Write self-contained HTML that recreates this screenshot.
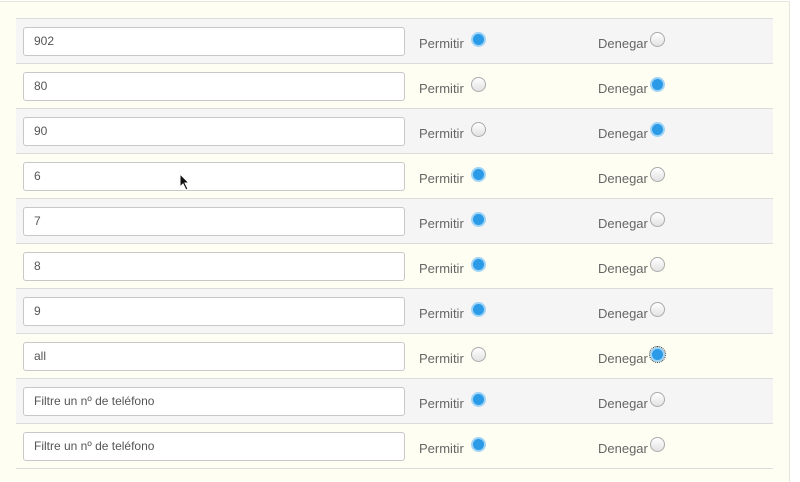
<!DOCTYPE html>
<html><head><style>
body{margin:0;width:800px;height:476px;background:#fff;font-family:"Liberation Sans",sans-serif;overflow:hidden;position:relative}
.panel{position:absolute;left:0;top:1px;width:789px;height:480px;background:#fefef2;border-top:1px solid #e6e6dc;border-right:1px solid #e6e6dc}
.row{position:absolute;left:16px;width:757px;height:44px;border-top:1px solid #dcdcdc}
.g{background:#f5f5f5}
.inp{position:absolute;left:7px;top:8px;width:370px;height:27px;border:1px solid #c8c8c8;border-radius:3px;background:#fff;font-size:12px;color:#555;line-height:27px;padding-left:10px}
.lbl{position:absolute;top:17px;font-size:13px;color:#666;line-height:16px}
.r{position:absolute;top:13px;width:15px;height:15px;border-radius:50%;border:1px solid #aaa;background:linear-gradient(#fff,#e2e2e2);box-sizing:border-box}
.r.on{border:2px solid #9fd3f5;background:#2b9be8}
.p{left:455px}.d{left:634px}
</style></head><body>
<div class="panel"></div>
<div class="row g" style="top:18px"><div class="inp">902</div><div class="lbl" style="left:403px">Permitir</div><span class="r p on"></span><div class="lbl" style="left:582px">Denegar</div><span class="r d"></span></div>
<div class="row" style="top:63px"><div class="inp">80</div><div class="lbl" style="left:403px">Permitir</div><span class="r p"></span><div class="lbl" style="left:582px">Denegar</div><span class="r d on"></span></div>
<div class="row g" style="top:108px"><div class="inp">90</div><div class="lbl" style="left:403px">Permitir</div><span class="r p"></span><div class="lbl" style="left:582px">Denegar</div><span class="r d on"></span></div>
<div class="row" style="top:153px"><div class="inp">6</div><div class="lbl" style="left:403px">Permitir</div><span class="r p on"></span><div class="lbl" style="left:582px">Denegar</div><span class="r d"></span></div>
<div class="row g" style="top:198px"><div class="inp">7</div><div class="lbl" style="left:403px">Permitir</div><span class="r p on"></span><div class="lbl" style="left:582px">Denegar</div><span class="r d"></span></div>
<div class="row" style="top:243px"><div class="inp">8</div><div class="lbl" style="left:403px">Permitir</div><span class="r p on"></span><div class="lbl" style="left:582px">Denegar</div><span class="r d"></span></div>
<div class="row g" style="top:288px"><div class="inp">9</div><div class="lbl" style="left:403px">Permitir</div><span class="r p on"></span><div class="lbl" style="left:582px">Denegar</div><span class="r d"></span></div>
<div class="row" style="top:333px"><div class="inp">all</div><div class="lbl" style="left:403px">Permitir</div><span class="r p"></span><div class="lbl" style="left:582px">Denegar</div><span class="r d on" style="outline:1px dotted #333;outline-offset:0"></span></div>
<div class="row g" style="top:378px"><div class="inp">Filtre un nº de teléfono</div><div class="lbl" style="left:403px">Permitir</div><span class="r p on"></span><div class="lbl" style="left:582px">Denegar</div><span class="r d"></span></div>
<div class="row" style="top:423px;border-bottom:1px solid #dcdcdc"><div class="inp">Filtre un nº de teléfono</div><div class="lbl" style="left:403px">Permitir</div><span class="r p on"></span><div class="lbl" style="left:582px">Denegar</div><span class="r d"></span></div>
<svg style="position:absolute;left:179px;top:173px" width="12" height="18" viewBox="0 0 12 18"><path d="M1 1 L1 14 L4 11 L7 17 L9 16 L6 10 L10 10 Z" fill="#111" stroke="#fff" stroke-width="1"/></svg>
</body></html>
